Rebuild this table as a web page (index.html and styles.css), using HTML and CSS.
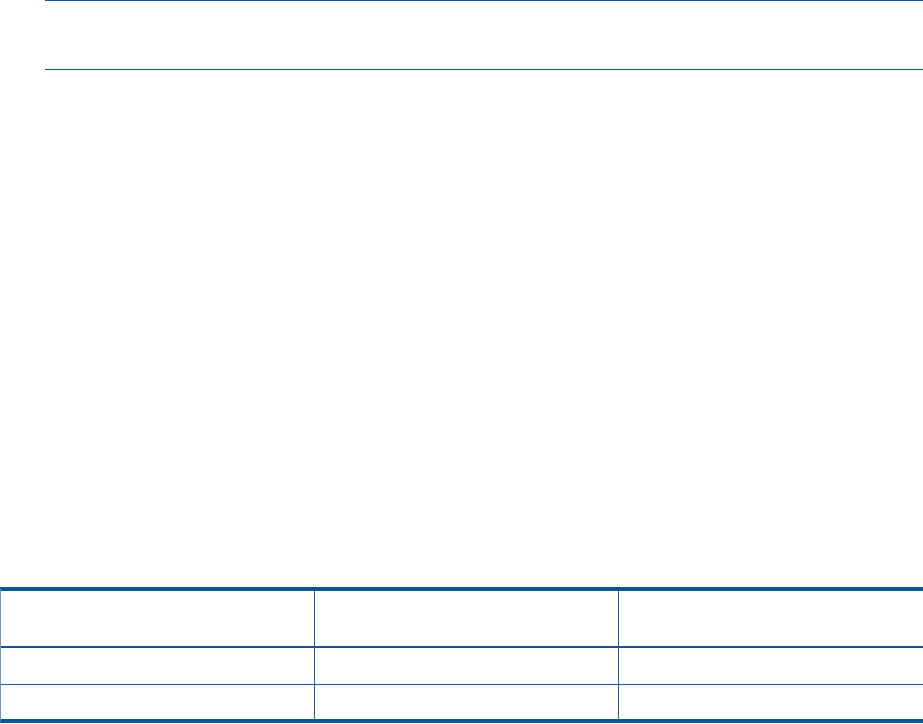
FILE: index.html
```html
<!DOCTYPE html>
<html lang="en">
<head>
  <meta charset="UTF-8" />
  <meta name="viewport" content="width=device-width, initial-scale=1.0" />
  <title>Document</title>
  <link rel="stylesheet" href="styles.css">
</head>
<body>
  <div class="note"></div>

  <table class="doc-table">
    <thead>
      <tr>
        <th class="col-a"></th>
        <th class="col-b"></th>
        <th class="col-c"></th>
      </tr>
    </thead>
    <tbody>
      <tr class="row-mid">
        <td></td>
        <td></td>
        <td></td>
      </tr>
      <tr class="row-last">
        <td></td>
        <td></td>
        <td></td>
      </tr>
    </tbody>
  </table>
</body>
</html>
```

FILE: styles.css
```css
body {
  margin: 0;
  font-family: 'Liberation Sans', Arial, sans-serif;
  font-size: 13px;
  color: #000;
  background: #fff;
}
.note {
  margin-left: 45px;
  height: 68px;
  border-top: 1px solid #0b5590;
  border-bottom: 1px solid #0b5590;
}
.doc-table {
  margin-top: 517px;
  width: 922px;
  border-collapse: separate;
  border-spacing: 0;
  table-layout: fixed;
  border-top: 4px solid #0b5590;
  border-bottom: 4px solid #0b5590;
  border-left: 1px solid #6d98c0;
  border-right: 1px solid #6d98c0;
}
.doc-table th,
.doc-table td {
  padding: 0;
  border-left: 1px solid #1c5f9c;
}
.doc-table th:first-child,
.doc-table td:first-child {
  border-left: none;
}
.col-a { width: 313px; }
.col-b { width: 303px; }
.col-c { width: 304px; }
.doc-table th {
  height: 55px;
  border-bottom: 2px solid #0b5590;
}
.row-mid td {
  height: 36px;
  border-bottom: 1px solid #1c5f9c;
}
.row-last td {
  height: 34px;
}
```
